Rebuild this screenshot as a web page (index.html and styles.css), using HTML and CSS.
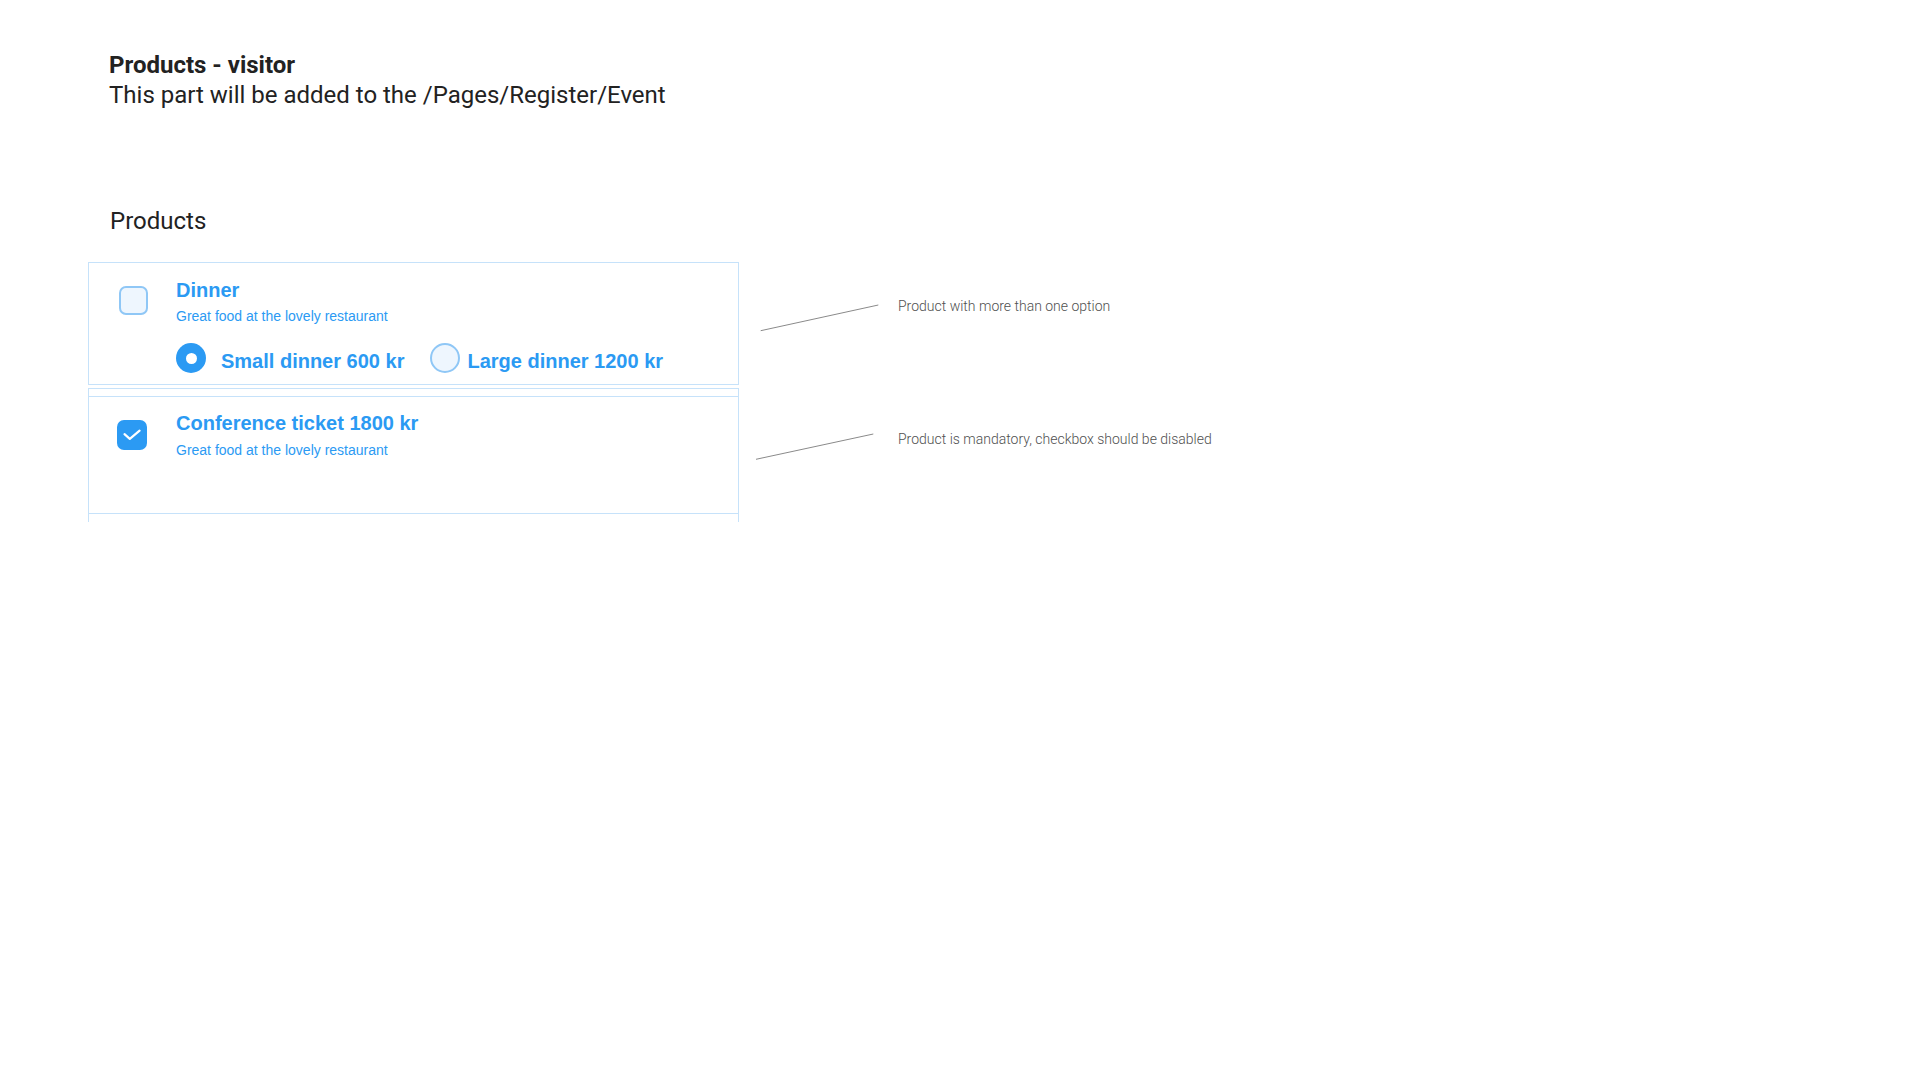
FILE: index.html
```html
<!DOCTYPE html>
<html lang="en">
<head>
<meta charset="utf-8">
<title>Products - visitor</title>
<link rel="stylesheet" href="styles.css">
</head>
<body>
<div class="page">
  <header class="intro">
    <h1 class="intro-title">Products - visitor</h1>
    <p class="intro-sub">This part will be added to the /Pages/Register/Event</p>
  </header>

  <h2 class="section-title">Products</h2>

  <div class="row row-dinner">
    <div class="card">
      <div class="product product-dinner">
        <span class="checkbox checkbox-empty"></span>
        <div class="product-body">
          <div class="product-title">Dinner</div>
          <div class="product-sub">Great food at the lovely restaurant</div>
          <div class="options">
            <div class="option option-first">
              <span class="radio radio-on"><span class="radio-dot"></span></span>
              <span class="option-label">Small dinner 600 kr</span>
            </div>
            <div class="option option-second">
              <span class="radio radio-off"></span>
              <span class="option-label">Large dinner 1200 kr</span>
            </div>
          </div>
        </div>
      </div>
    </div>
    <div class="note note-dinner">
      <svg class="note-line" width="159" height="100" viewBox="0 0 159 100">
        <line x1="21.7" y1="68.7" x2="139.3" y2="43" stroke="#8a8a8a" stroke-width="1"/>
      </svg>
      <span class="note-text">Product with more than one option</span>
    </div>
  </div>

  <div class="row row-ticket">
    <div class="table">
      <div class="table-head"></div>
      <div class="product product-ticket">
        <span class="checkbox checkbox-on">
          <svg width="30" height="30" viewBox="0 0 30 30"><path d="M7.5 14.2 L12.8 18.8 L22.6 10.6" fill="none" stroke="#ffffff" stroke-width="2.2" stroke-linecap="round" stroke-linejoin="round"/></svg>
        </span>
        <div class="product-body">
          <div class="product-title">Conference ticket 1800 kr</div>
          <div class="product-sub product-sub-ticket">Great food at the lovely restaurant</div>
        </div>
      </div>
      <div class="table-rest"></div>
    </div>
    <div class="note note-ticket">
      <svg class="note-line" width="159" height="100" viewBox="0 0 159 100">
        <line x1="17" y1="71.3" x2="134.3" y2="46" stroke="#8a8a8a" stroke-width="1"/>
      </svg>
      <span class="note-text">Product is mandatory, checkbox should be disabled</span>
    </div>
  </div>
</div>
</body>
</html>
```

FILE: styles.css
```css
* { box-sizing: border-box; }

html, body {
  margin: 0;
  padding: 0;
  background: #ffffff;
}

body {
  font-family: Roboto, "Liberation Sans", Arial, sans-serif;
  color: #222222;
}

.page {
  width: 1920px;
  height: 1080px;
  overflow: hidden;
}

.intro {
  padding: 50px 0 0 109px;
}

.intro-title {
  margin: 0;
  font-size: 24px;
  line-height: 30px;
  font-weight: 700;
  color: #222222;
}

.intro-sub {
  margin: 0;
  font-size: 24px;
  line-height: 30px;
  font-weight: 400;
  color: #222222;
}

.section-title {
  margin: 97px 0 0 110px;
  font-size: 24px;
  line-height: 28px;
  font-weight: 400;
  color: #222222;
}

.row {
  display: flex;
  align-items: flex-start;
  padding-left: 88px;
}

.row-dinner { margin-top: 27px; }
.row-ticket { margin-top: 3px; }

.card {
  width: 651px;
  border: 1px solid #c6e2fa;
  padding: 15px 0 11px 30px;
}

.product {
  display: flex;
  align-items: flex-start;
  font-family: "Liberation Sans", Arial, sans-serif;
  color: #2b9af3;
}

.checkbox {
  flex: none;
  display: block;
  width: 29px;
  height: 29px;
  border-radius: 7px;
}

.checkbox-empty {
  margin-top: 8px;
  border: 2px solid #8fc7f6;
  background: #eef6fe;
}

.checkbox-on {
  width: 30px;
  height: 30px;
  margin-top: 9px;
  background: #2b9af3;
}

.checkbox-on svg { display: block; }

.product-body {
  margin-left: 28px;
}

.product-ticket .product-body { margin-left: 29px; }

.product-title {
  font-size: 20px;
  line-height: 24px;
  font-weight: 700;
}

.product-sub {
  margin-top: 5px;
  font-size: 14px;
  line-height: 18px;
}

.product-sub-ticket { margin-top: 6px; }

.options {
  display: flex;
  margin-top: 18px;
}

.option {
  display: flex;
  align-items: flex-start;
}

.option-first { gap: 15px; }
.option-second { gap: 7px; margin-left: 26px; }

.radio {
  flex: none;
  display: flex;
  align-items: center;
  justify-content: center;
  width: 30px;
  height: 30px;
  border-radius: 50%;
}

.radio-on { background: #2b9af3; }

.radio-dot {
  width: 11px;
  height: 11px;
  border-radius: 50%;
  background: #ffffff;
}

.radio-off {
  border: 2px solid #8fc7f6;
  background: #eef6fe;
}

.option-label {
  padding-top: 6px;
  font-size: 20px;
  line-height: 24px;
  font-weight: 700;
  white-space: nowrap;
}

.table {
  width: 651px;
  height: 134px;
  overflow: hidden;
  border: 1px solid #c6e2fa;
  border-bottom: none;
}

.table-head {
  height: 8px;
  border-bottom: 1px solid #c6e2fa;
}

.product-ticket {
  height: 117px;
  padding: 14px 0 0 28px;
  border-bottom: 1px solid #c6e2fa;
}

.table-rest { height: 20px; }

.note {
  display: flex;
  align-items: flex-start;
}

.note-line {
  flex: none;
  display: block;
}

.note-text {
  font-family: Roboto, "Liberation Sans", Arial, sans-serif;
  font-size: 14px;
  line-height: 16px;
  font-weight: 300;
  color: #505050;
  white-space: nowrap;
}

.note-dinner .note-text { margin-top: 36px; }
.note-ticket .note-text { margin-top: 43px; }
```
